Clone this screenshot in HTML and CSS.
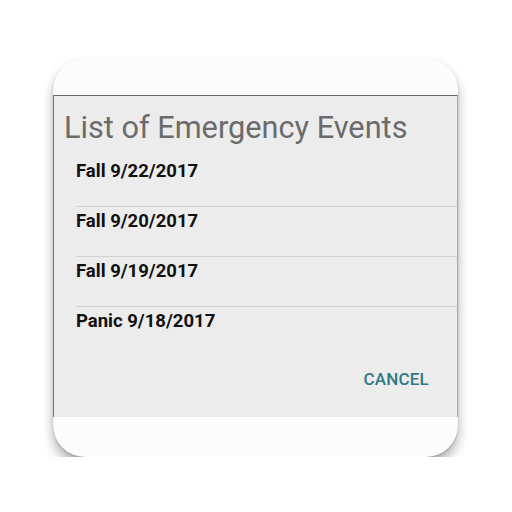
FILE: index.html
```html
<!DOCTYPE html>
<html>
<head>
<meta charset="utf-8">
<link rel="stylesheet" href="styles.css">
</head>
<body>
<div class="card">
  <div class="top"></div>
  <div class="panel">
    <div class="title">List of Emergency Events</div>
    <ul class="list">
      <li class="item">Fall 9/22/2017</li>
      <li class="item">Fall 9/20/2017</li>
      <li class="item">Fall 9/19/2017</li>
      <li class="item">Panic 9/18/2017</li>
    </ul>
    <div class="actions"><span class="btn">CANCEL</span></div>
  </div>
  <div class="bottom"></div>
</div>
</body>
</html>
```
FILE: styles.css
```css
html, body {
  margin: 0;
  padding: 0;
  background: #ffffff;
  font-family: Roboto, "Liberation Sans", sans-serif;
}
.card {
  margin: 58px 0 0 53px;
  width: 405px;
  height: 399px;
  border-radius: 32px;
  background: #fcfcfc;
  box-shadow: 0 8px 12px rgba(0,0,0,0.3), 0 1px 2px rgba(0,0,0,0.2);
  overflow: hidden;
  display: flex;
  flex-direction: column;
}
.top {
  height: 37px;
  flex: none;
}
.panel {
  height: 322px;
  flex: none;
  box-sizing: border-box;
  background: #ececec;
  border-top: 1px solid #6a6a6a;
  border-left: 1px solid #777;
  border-right: 1px solid #aaa;
  display: flex;
  flex-direction: column;
}
.title {
  font-size: 30.7px;
  color: #6b6b6b;
  margin: 15px 0 0 10px;
  line-height: 34px;
  white-space: nowrap;
}
.list {
  list-style: none;
  margin: 12px 0 0 22px;
  padding: 0;
}
.item {
  font-size: 18.5px;
  font-weight: 700;
  color: #111;
  height: 50px;
  line-height: 20px;
  padding-top: 4px;
  box-sizing: border-box;
  border-bottom: 1px solid #d2d2d2;
}
.item:last-child {
  border-bottom-color: transparent;
}
.actions {
  display: flex;
  justify-content: flex-end;
  padding-right: 28px;
  margin-top: 12px;
}
.btn {
  font-size: 17px;
  line-height: 20px;
  font-weight: 500;
  color: #2e7a87;
  letter-spacing: 0.2px;
}
.bottom {
  flex: 1;
}
```
